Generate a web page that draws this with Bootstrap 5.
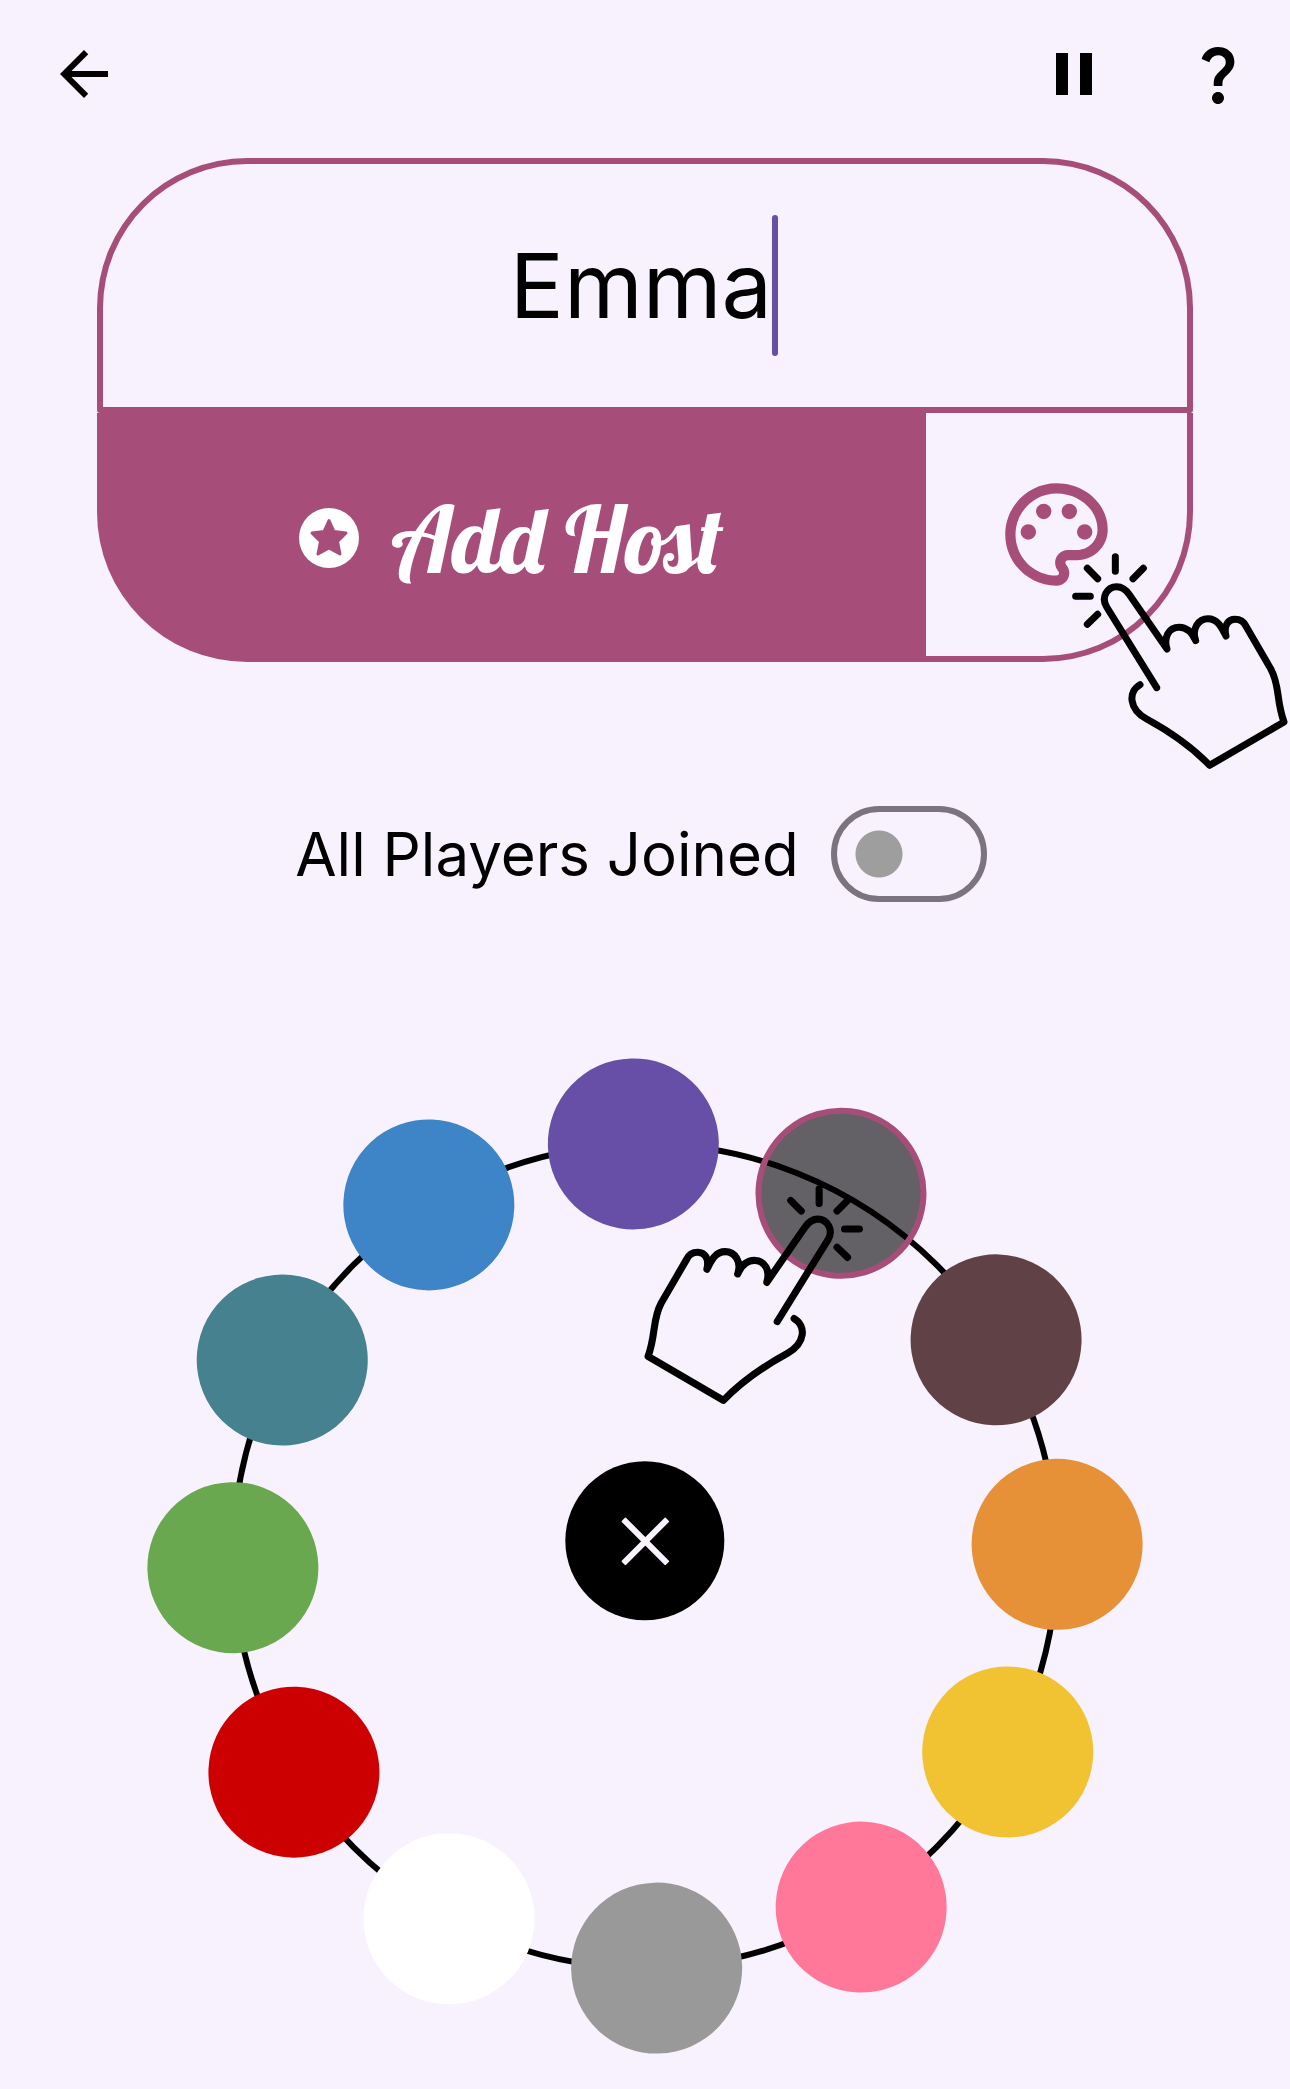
<!DOCTYPE html>
<html lang="en">
<head>
<meta charset="utf-8">
<meta name="viewport" content="width=device-width, initial-scale=1">
<title>Add players</title>
<link href="https://cdn.jsdelivr.net/npm/bootstrap@5.3.0/dist/css/bootstrap.min.css" rel="stylesheet">
<style>
  :root { --paper: #f8f2fe; --plum: #a64d79; --violet: #674fa5; }
  body { background: var(--paper); color: #000; font-family: Inter, "Noto Sans", sans-serif; overflow-x: hidden; }
  button { color: inherit; }
  .topbar { height: 148px; padding-left: 12px; }
  .icon-btn { width: 144px; height: 144px; border: 0; background: none; }
  .icon-btn svg { width: 72px; height: 72px; fill: currentColor; }
  .page-pad { padding: 10px 97px 0; }
  .name-input { height: 255px; border: 6px solid var(--plum); border-radius: 150px 150px 3px 3px; background: transparent; font-size: 90px; line-height: 120px; outline: 0; color: #000; padding: 0 8px 0 0; caret-color: transparent; }
  .caret-bar { position: absolute; left: 50%; top: 57px; margin-left: 127px; width: 6px; height: 141px; border-radius: 3px; background: var(--violet); }
  .name-actions { height: 249px; }
  .host-btn { background: var(--plum); color: #fff; border: 0; border-bottom-left-radius: 150px; gap: 32px; font: 92px/108px Lobster, "Liberation Serif", serif; }
  .host-btn svg { width: 60px; height: 60px; }
  .host-btn span { padding-top: 2px; }
  .palette-btn { width: 24.4%; color: var(--plum); background: transparent; border: solid var(--plum); border-width: 0 6px 6px 0; border-bottom-right-radius: 150px; }
  .palette-btn svg { width: 123px; height: 123px; fill: currentColor; }
  .tap { position: absolute; pointer-events: none; fill: none; stroke: #000; stroke-width: 21; stroke-linecap: round; stroke-linejoin: round; }
  .tap-palette { width: 216px; height: 216px; right: -95px; top: 395px; }
  .joined-row { margin-top: 144px; gap: 32px; padding-right: 8px; font-size: 60px; line-height: 96px; }
  .joined-switch.form-check-input { width: 156px; height: 96px; margin: 0; border: 6px solid #7b7480; border-radius: 48px; background: radial-gradient(circle at 42px 42px, #9e9e9e 23px, transparent 24px) no-repeat; }
  .wheel { width: 100%; max-width: 996px; aspect-ratio: 1; margin: 156px auto 35px; }
  .wheel-ring { position: absolute; inset: 0; width: 100%; height: 100%; fill: none; stroke: #000; stroke-width: 6; }
  .swatch { appearance: none; position: absolute; left: 50%; top: 50%; width: 17.2%; height: 17.2%; margin: 0; border-radius: 50%; transform: translate(-50%, -50%) rotate(var(--turn)) translateY(-240.6%); background: var(--ink); }
  .swatch:checked { border: 6px solid var(--plum); }
  .close-btn { position: absolute; left: 50%; top: 48.5%; width: 16%; height: 16%; transform: translate(-50%, -50%); border: 0; border-radius: 50%; background: #000; color: var(--paper); }
  .close-btn svg { width: 48px; height: 48px; stroke: currentColor; stroke-width: 6; }
  .tap-color { width: 22%; left: 49.9%; top: 12.8%; transform: scaleX(-1); }
</style>
</head>
<body>
<svg class="d-none" xmlns="http://www.w3.org/2000/svg">
  <symbol id="tap-hand" viewBox="516 489 648 648">
    <path d="M646 500V544M730 535L699 566M562 535L593 566M527 619H571M593 673L562 703"/>
    <path d="M770 893L620 651C602 622 622 590 650 590C668 590 680 602 688 614L801 777C790 742 806 712 838 712C862 712 876 728 887 752C874 715 896 686 924 686C955 686 966 716 978 738C970 706 985 688 1005 688C1022 688 1032 696 1038 709L1113 838C1140 888 1128 930 1152 996L929 1126C870 1065 810 1025 740 987C686 957 684 905 720 884"/>
  </symbol>
</svg>

<header class="topbar d-flex align-items-center">
  <button class="icon-btn me-auto" type="button" aria-label="Back"><svg viewBox="0 0 24 24"><path d="M20 11H7.83l5.59-5.59L12 4l-8 8 8 8 1.41-1.41L7.83 13H20v-2z"/></svg></button>
  <button class="icon-btn" type="button" aria-label="Pause"><svg viewBox="0 0 24 24"><path d="M6 19h4V5H6v14zm8-14v14h4V5h-4z"/></svg></button>
  <button class="icon-btn" type="button" aria-label="Help"><svg viewBox="0 0 24 24"><path d="M11.07 12.85c.77-1.39 2.25-2.21 3.11-3.44.91-1.29.4-3.7-2.18-3.7-1.69 0-2.52 1.28-2.87 2.34L6.54 6.96C7.25 4.83 9.18 3 11.99 3c2.35 0 3.96 1.07 4.78 2.41.7 1.15 1.11 3.3.03 4.9-1.2 1.77-2.35 2.31-2.97 3.45-.25.46-.35.76-.35 2.24h-2.89c-.01-.78-.13-2.05.48-3.15zM14 20c0 1.1-.9 2-2 2s-2-.9-2-2 .9-2 2-2 2 .9 2 2z"/></svg></button>
</header>

<main class="page-pad">
  <form class="position-relative">
    <input class="name-input d-block w-100 text-center" type="text" value="Emma" aria-label="Player name">
    <span class="caret-bar"></span>
    <div class="name-actions d-flex">
      <button class="host-btn flex-grow-1 d-flex align-items-center justify-content-center" type="button">
        <svg viewBox="-30 -30 60 60"><circle r="30" fill="#fff"/><path d="M0-17.500L5-6.500L17-5L8.500 3.500L11 16L0 10L-11 16L-8.500 3.500L-17-5L-5-6.500Z" fill="#a64d79" stroke="#a64d79" stroke-width="3" stroke-linejoin="round"/></svg>
        <span>Add Host</span>
      </button>
      <button class="palette-btn d-flex align-items-center justify-content-center" type="button" aria-label="Choose colour">
        <svg viewBox="0 0 24 24"><path d="M12 22C6.490 22 2 17.510 2 12S6.490 2 12 2s10 4.040 10 9c0 3.310-2.690 6-6 6h-1.770c-.28 0-.5.22-.5.5 0 .12.050.23.130.33.410.47.640 1.060.640 1.670C14.500 20.880 13.380 22 12 22zM12 4c-4.410 0-8 3.590-8 8s3.590 8 8 8c.28 0 .5-.22.5-.5 0-.16-.08-.28-.14-.35-.41-.46-.63-1.050-.63-1.650 0-1.380 1.120-2.500 2.500-2.500H16c2.210 0 4-1.790 4-4C20 7.140 16.410 4 12 4z"/><circle cx="6.500" cy="11.500" r="1.500"/><circle cx="9.500" cy="7.500" r="1.500"/><circle cx="14.500" cy="7.500" r="1.500"/><circle cx="17.500" cy="11.500" r="1.500"/></svg>
      </button>
    </div>
    <svg class="tap tap-palette"><use href="#tap-hand"/></svg>
  </form>

  <div class="joined-row d-flex align-items-center justify-content-center">
    <label for="joined">All Players Joined</label>
    <input class="joined-switch form-check-input" type="checkbox" role="switch" id="joined">
  </div>

  <div class="wheel position-relative" role="radiogroup" aria-label="Player colour">
    <svg class="wheel-ring" viewBox="0 0 996 996"><circle cx="498" cy="498" r="412"/></svg>
    <input class="swatch" type="radio" name="color" aria-label="Purple" style="--turn:-1.6deg;--ink:#674ea7">
    <input class="swatch" type="radio" name="color" aria-label="Black" checked style="--turn:28.4deg;--ink:rgba(0,0,0,.6)">
    <input class="swatch" type="radio" name="color" aria-label="Brown" style="--turn:58.4deg;--ink:#604246">
    <input class="swatch" type="radio" name="color" aria-label="Orange" style="--turn:88.4deg;--ink:#e69138">
    <input class="swatch" type="radio" name="color" aria-label="Yellow" style="--turn:118.4deg;--ink:#f1c232">
    <input class="swatch" type="radio" name="color" aria-label="Pink" style="--turn:148.4deg;--ink:#ff7799">
    <input class="swatch" type="radio" name="color" aria-label="Grey" style="--turn:178.4deg;--ink:#999999">
    <input class="swatch" type="radio" name="color" aria-label="White" style="--turn:208.4deg;--ink:#ffffff">
    <input class="swatch" type="radio" name="color" aria-label="Red" style="--turn:238.4deg;--ink:#cc0000">
    <input class="swatch" type="radio" name="color" aria-label="Green" style="--turn:268.4deg;--ink:#6aa84f">
    <input class="swatch" type="radio" name="color" aria-label="Teal" style="--turn:298.4deg;--ink:#45818e">
    <input class="swatch" type="radio" name="color" aria-label="Blue" style="--turn:328.4deg;--ink:#3d85c6">
    <button class="close-btn d-flex align-items-center justify-content-center" type="button" aria-label="Close colours"><svg viewBox="0 0 48 48"><path d="M2 2L46 46M46 2L2 46"/></svg></button>
    <svg class="tap tap-color" viewBox="0 0 648 648"><use href="#tap-hand" width="648" height="648"/></svg>
  </div>
</main>
<script src="https://cdn.jsdelivr.net/npm/bootstrap@5.3.0/dist/js/bootstrap.bundle.min.js"></script>
</body>
</html>
